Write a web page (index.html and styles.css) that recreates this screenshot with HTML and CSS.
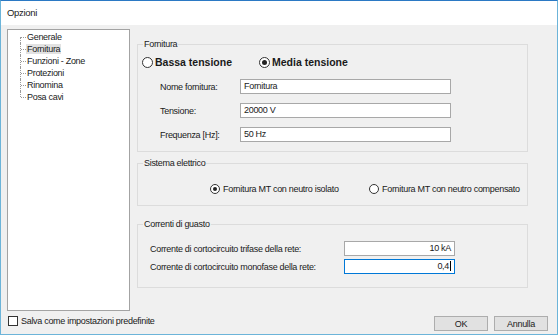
FILE: index.html
```
<!DOCTYPE html>
<html lang="it">
<head>
    <meta charset="UTF-8">
    <title>Opzioni</title>
    <link rel="stylesheet" href="styles.css">
</head>
<body>
    <div class="window">
        <div class="titlebar">Opzioni</div>

        <div class="dialog">
            <div class="main">
                <ul class="tree">
                    <li><span>Generale</span></li>
                    <li class="selected"><span>Fornitura</span></li>
                    <li><span>Funzioni - Zone</span></li>
                    <li><span>Protezioni</span></li>
                    <li><span>Rinomina</span></li>
                    <li><span>Posa cavi</span></li>
                </ul>

                <div class="pages">
                    <fieldset class="group group-fornitura">
                        <legend>Fornitura</legend>
                        <div class="radio-row big">
                            <label class="radio first"><span class="dot"></span>Bassa tensione</label>
                            <label class="radio checked"><span class="dot"></span>Media tensione</label>
                        </div>
                        <div class="form-row">
                            <span class="label">Nome fornitura:</span>
                            <div class="field">Fornitura</div>
                        </div>
                        <div class="form-row">
                            <span class="label">Tensione:</span>
                            <div class="field">20000 V</div>
                        </div>
                        <div class="form-row">
                            <span class="label">Frequenza [Hz]:</span>
                            <div class="field">50 Hz</div>
                        </div>
                    </fieldset>

                    <fieldset class="group group-sistema">
                        <legend>Sistema elettrico</legend>
                        <div class="radio-row small">
                            <label class="radio first checked"><span class="dot"></span>Fornitura MT con neutro isolato</label>
                            <label class="radio"><span class="dot"></span>Fornitura MT con neutro compensato</label>
                        </div>
                    </fieldset>

                    <fieldset class="group group-correnti">
                        <legend>Correnti di guasto</legend>
                        <div class="form-row">
                            <span class="label">Corrente di cortocircuito trifase della rete:</span>
                            <div class="field num">10 kA</div>
                        </div>
                        <div class="form-row">
                            <span class="label">Corrente di cortocircuito monofase della rete:</span>
                            <div class="field num focus">0,4<span class="caret"></span></div>
                        </div>
                    </fieldset>
                </div>
            </div>

            <div class="footer">
                <label class="check"><span class="box"></span>Salva come impostazioni predefinite</label>
                <div class="buttons">
                    <button>OK</button>
                    <button>Annulla</button>
                </div>
            </div>
        </div>
    </div>
</body>
</html>
```

FILE: styles.css
```
/* Windows style "Opzioni" dialog */
html, body {
    margin: 0;
    padding: 0;
}
body {
    font-family: 'Liberation Sans', Arial, sans-serif;
    font-size: 9px;
    letter-spacing: -0.3px;
    color: #1a1a1a;
    background: #f0f0f0;
    white-space: nowrap;
}
.window {
    width: 558px;
    height: 335px;
    box-sizing: border-box;
    border: 1px solid #6cb4d9;
    border-top-color: #2b79c4;
    display: flex;
    flex-direction: column;
}
.titlebar {
    height: 24px;
    line-height: 24px;
    padding-left: 6px;
    background: #fff;
    font-size: 9.5px;
}
.dialog {
    flex: 1;
    background: #f0f0f0;
    padding: 4px 9px 0 6px;
    display: flex;
    flex-direction: column;
}
.main {
    display: flex;
}

/* tree */
.tree {
    list-style: none;
    margin: 0;
    padding: 1px 0 0 0;
    width: 123px;
    height: 282px;
    box-sizing: border-box;
    border: 1px solid #a3a3a3;
    background: #fff;
}
.tree li {
    position: relative;
    height: 12px;
    line-height: 12px;
    padding-left: 18px;
}
.tree li::before {
    content: '';
    position: absolute;
    left: 12px;
    top: 0;
    bottom: 0;
    border-left: 1px dotted #9a9a9a;
}
.tree li:first-child::before {
    top: 6px;
}
.tree li:last-child::before {
    bottom: 6px;
}
.tree li::after {
    content: '';
    position: absolute;
    left: 13px;
    top: 6px;
    width: 5px;
    border-top: 1px dotted #9a9a9a;
}
.tree li span {
    padding: 0 1px;
}
.tree li.selected span {
    background: #e2e2e2;
}

/* group boxes */
.pages {
    margin-left: 7px;
    margin-top: 9px;
    width: 391px;
}
.group {
    margin: 0;
    padding: 0;
    min-width: 0;
    border: 1px solid #dcdcdc;
}
.group legend {
    margin-left: 5px;
    padding: 0 1px;
    line-height: 12px;
}
.group-fornitura {
    padding-bottom: 9px;
}
.group-sistema {
    margin-top: 5px;
    padding-bottom: 10px;
}
.group-correnti {
    margin-top: 12px;
    padding-bottom: 13px;
}

.radio-row {
    display: flex;
    align-items: center;
}
.radio {
    display: flex;
    align-items: center;
}
.radio .dot {
    box-sizing: border-box;
    border: 1px solid #333;
    border-radius: 50%;
    background: #fff;
    display: flex;
    align-items: center;
    justify-content: center;
}
.radio.checked .dot::after {
    content: '';
    border-radius: 50%;
    background: #222;
}

.radio-row.big {
    height: 14px;
    margin-top: 5px;
    padding-left: 4px;
    font-weight: bold;
    font-size: 10.5px;
    letter-spacing: 0;
}
.radio-row.big .first {
    width: 117px;
}
.radio-row.big .dot {
    width: 11px;
    height: 11px;
    margin-right: 2px;
}
.radio-row.big .checked .dot::after {
    width: 5px;
    height: 5px;
}

.radio-row.small {
    height: 12px;
    margin-top: 14px;
    padding-left: 72px;
}
.radio-row.small .first {
    width: 159px;
}
.radio-row.small .dot {
    width: 10px;
    height: 10px;
    margin-right: 3px;
}
.radio-row.small .checked .dot::after {
    width: 4px;
    height: 4px;
}

/* label + text box rows */
.form-row {
    display: flex;
    align-items: center;
    height: 15px;
}
.field {
    box-sizing: border-box;
    height: 15px;
    line-height: 13px;
    border: 1px solid #a8a8a8;
    background: #fff;
    padding: 0 3px;
}
.group-fornitura .form-row {
    padding-left: 22px;
    margin-top: 9px;
}
.group-fornitura .radio-row + .form-row {
    margin-top: 10px;
}
.group-fornitura .label {
    width: 80px;
}
.group-fornitura .field {
    width: 211px;
}
.group-correnti .form-row {
    padding-left: 12px;
    margin-top: 3px;
}
.group-correnti legend + .form-row {
    margin-top: 11px;
}
.group-correnti .label {
    width: 194px;
}
.group-correnti .field {
    width: 111px;
}
.field.num {
    text-align: right;
}
.field.focus {
    border-color: #0078d7;
}
.caret {
    display: inline-block;
    width: 1px;
    height: 10px;
    margin-left: 1px;
    background: #000;
    vertical-align: -2px;
}

/* footer */
.footer {
    display: flex;
    align-items: flex-start;
    padding-top: 5px;
}
.check {
    display: flex;
    align-items: center;
    line-height: 10px;
    margin-left: 1px;
}
.check .box {
    width: 10px;
    height: 10px;
    box-sizing: border-box;
    border: 1px solid #333;
    background: #fff;
    margin-right: 3px;
}
.buttons {
    margin-left: auto;
    display: flex;
    gap: 6px;
}
.buttons button {
    width: 54px;
    height: 15px;
    padding: 0;
    border: 1px solid #adadad;
    background: #e1e1e1;
    font-family: inherit;
    font-size: 9px;
    letter-spacing: -0.3px;
    color: #1a1a1a;
}
```
